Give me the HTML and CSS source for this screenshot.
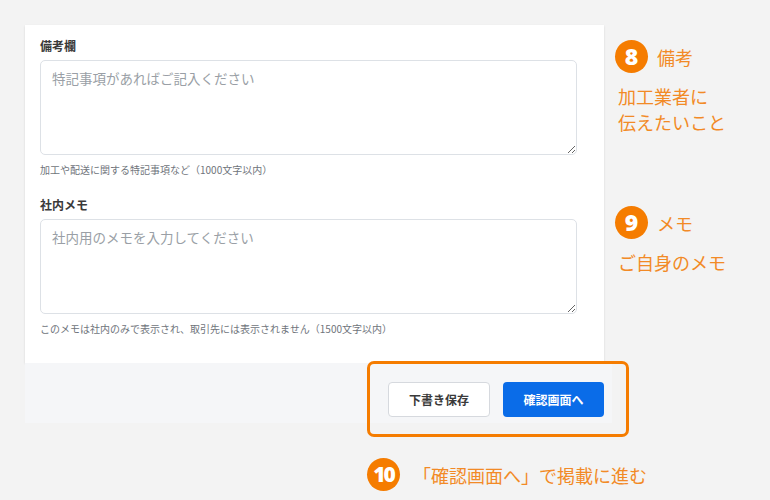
FILE: index.html
```html
<!DOCTYPE html>
<html lang="ja">
<head>
  <meta charset="UTF-8" />
  <title>備考・メモ入力</title>
  <link rel="stylesheet" href="styles.css">
</head>
<body>

<div class="page">
  <div class="main">
    <div class="card">
      <label class="field-label" for="remarks">備考欄</label>
      <textarea id="remarks" class="field-input" placeholder="特記事項があればご記入ください"></textarea>
      <p class="field-help">加工や配送に関する特記事項など（1000文字以内）</p>

      <label class="field-label second" for="memo">社内メモ</label>
      <textarea id="memo" class="field-input" placeholder="社内用のメモを入力してください"></textarea>
      <p class="field-help">このメモは社内のみで表示され、取引先には表示されません（1500文字以内）</p>
    </div>

    <div class="footer">
      <div class="actions">
        <button class="btn btn-sub">下書き保存</button>
        <button class="btn btn-main">確認画面へ</button>
      </div>
    </div>
  </div>

  <div class="notes">
    <div class="note">
      <div class="note-head"><span class="num">8</span>備考</div>
      <p class="note-text">加工業者に<br>伝えたいこと</p>
    </div>
    <div class="note note-memo">
      <div class="note-head"><span class="num">9</span>メモ</div>
      <p class="note-text">ご自身のメモ</p>
    </div>
  </div>

  <div class="note-last">
    <span class="num num-wide">10</span>「確認画面へ」で掲載に進む
  </div>
</div>

</body>
</html>
```

FILE: styles.css
```css
body {
  margin: 0;
  background: #f3f3f3;
  font-family: "Noto Sans CJK JP", "Noto Sans", sans-serif;
  color: #333;
}
.page {
  display: grid;
  grid-template-columns: 579px 1fr;
  column-gap: 11px;
  padding: 25px 0 0 25px;
}
.card {
  background: white;
  padding: 12px 27px 28px 15px;
  box-shadow: 0 1px 2px rgba(0, 0, 0, 0.12);
  display: flex;
  flex-direction: column;
}
.field-label {
  font-size: 12px;
  font-weight: bold;
  line-height: 18px;
  margin-bottom: 5px;
  color: #3a3a3a;
}
.field-label.second {
  margin-top: 20px;
}
.field-input {
  box-sizing: border-box;
  width: 537px;
  height: 95px;
  margin: 0;
  padding: 8px 11px;
  font-family: inherit;
  font-size: 13.5px;
  line-height: 18px;
  color: #333;
  border: 1px solid #dde1e6;
  border-radius: 5px;
}
.field-input::placeholder {
  color: #9a9fa6;
}
.field-help {
  margin: 8px 0 0;
  font-size: 10px;
  line-height: 13px;
  color: #6f747b;
}
.footer {
  background: #f5f6f8;
  margin-right: -8px;
  padding: 19px 8px 6px 0;
  display: flex;
  justify-content: flex-end;
}
.actions {
  position: relative;
  display: flex;
  gap: 13px;
}
.actions::after {
  content: "";
  position: absolute;
  top: -21px;
  left: -21px;
  right: -25px;
  bottom: -20px;
  border: 3px solid #f57c00;
  border-radius: 7px;
}
.btn {
  width: 102px;
  height: 35px;
  font-family: inherit;
  font-size: 12px;
  font-weight: bold;
  border-radius: 4px;
  cursor: pointer;
}
.btn-sub {
  background: white;
  color: #3a3a3a;
  border: 1px solid #d6d9de;
}
.btn-main {
  width: 101px;
  background: #0a6ce8;
  color: white;
  border: none;
}
.notes {
  padding-top: 15px;
  color: #f28a26;
}
.note-head {
  display: flex;
  align-items: center;
  gap: 9px;
  font-size: 18px;
}
.num {
  flex: none;
  box-sizing: border-box;
  width: 33px;
  height: 33px;
  border-radius: 50%;
  background: #f57c00;
  color: white;
  font-family: "Open Sans", sans-serif;
  font-weight: 800;
  font-size: 23px;
  line-height: 1;
  display: flex;
  align-items: center;
  justify-content: center;
}
.num-wide {
  font-size: 21px;
  letter-spacing: -2px;
}
.note-text {
  margin: 10px 0 0 3px;
  font-size: 18px;
  line-height: 26px;
}
.note-memo {
  margin-top: 71px;
}
.note-last {
  grid-column: 1 / -1;
  display: flex;
  align-items: center;
  gap: 13px;
  margin: 35px 0 0 342px;
  font-size: 18px;
  color: #f28a26;
}
```
